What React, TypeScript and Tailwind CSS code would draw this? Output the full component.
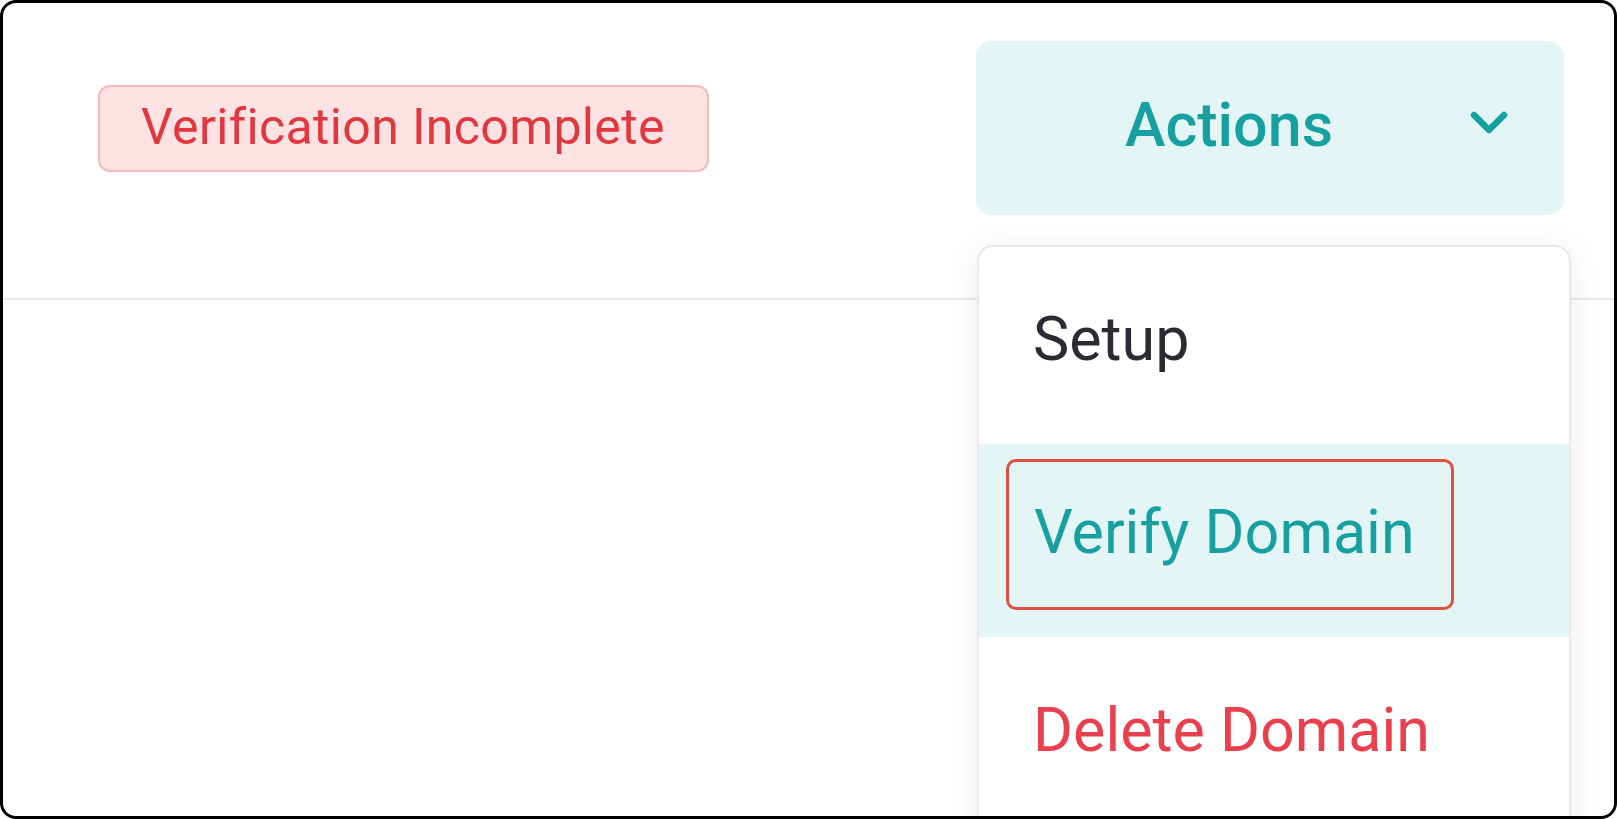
import React from "react";

export default function App() {
  return (
    <div className="w-[1617px] h-[819px] bg-white font-['Roboto',sans-serif]">
      <div className="relative w-full h-full border-[3px] border-black rounded-[16px] overflow-hidden bg-white">
        <div className="flex items-start justify-between h-[297px] border-b-2 border-[#e8e9ef]">
          <div className="ml-[95px] mt-[82px] h-[87px] pl-[41px] pr-[42px] pb-[4px] flex items-center rounded-[12px] bg-[#fde2e3] border-2 border-[#f6b9bb] text-[#e1383f] text-[50px] leading-none tracking-[0.35px]">
            Verification Incomplete
          </div>
          <button className="mt-[38px] mr-[50px] w-[588px] h-[174px] rounded-[16px] bg-[#e4f5f5] text-[#17a0a0] flex items-center relative">
            <span className="flex-1 text-center text-[61px] font-medium leading-none pr-[82px] pb-[6px]">Actions</span>
            <svg className="absolute right-[54px] top-[66px]" width="42" height="32" viewBox="0 0 42 32" fill="none">
              <path d="M6 8 L21 23 L36 8" stroke="#17a0a0" strokeWidth="6.5" strokeLinecap="round" strokeLinejoin="round" />
            </svg>
          </button>
        </div>
        <div className="absolute left-[974px] top-[242px] w-[594px] h-[620px] bg-white border-2 border-[#e6e7ef] rounded-t-[16px] shadow-[0_4px_30px_rgba(0,0,0,0.08)] flex flex-col">
          <div className="h-[197px] flex items-center pl-[54px] pb-[12px] text-[61px] text-[#2b2b33] leading-none">Setup</div>
          <div className="h-[193px] flex items-start bg-[#e4f5f5] pl-[27px] pt-[15px]">
            <div className="h-[151px] w-[448px] flex items-center pl-[25px] pb-[4px] border-[3px] border-[#e0503e] rounded-[10px] text-[61px] text-[#17a0a0] leading-none">Verify Domain</div>
          </div>
          <div className="h-[193px] flex items-center pl-[54px] pb-[6px] text-[61px] text-[#ec3f4d] leading-none">Delete Domain</div>
        </div>
      </div>
    </div>
  );
}
